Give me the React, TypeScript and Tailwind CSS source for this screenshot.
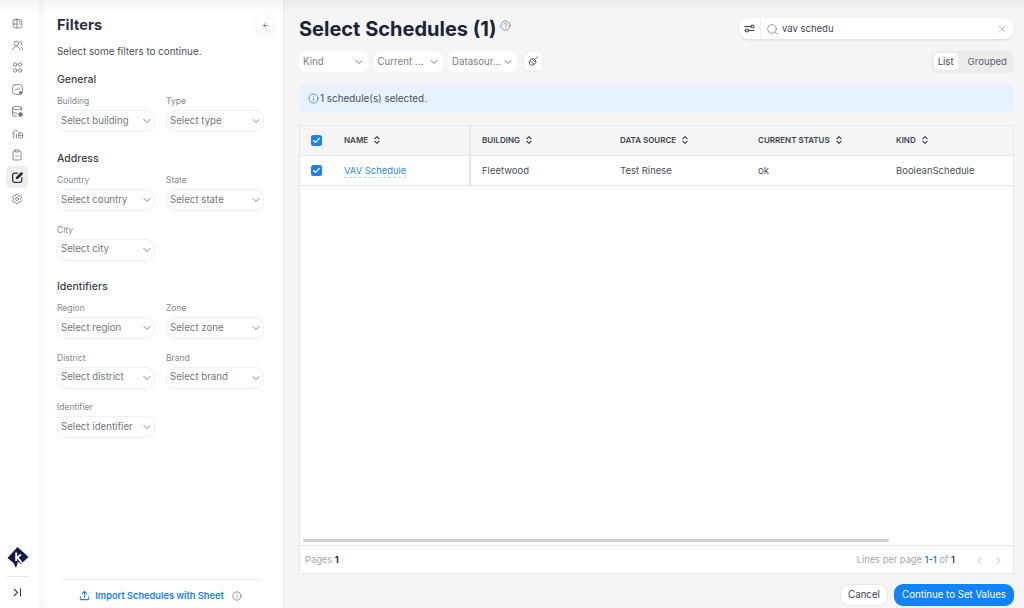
import React from "react";
import { ChevronDown, ChevronLeft, ChevronRight, ChevronsUpDown, Search, X, Info, CircleHelp, ArrowLeft, Upload, Check, Settings, ClipboardCheck } from "lucide-react";

const S = ({ children, w = 1.6 }: { children: React.ReactNode; w?: number }) => (
  <svg width="13" height="13" viewBox="0 0 24 24" fill="none" stroke="currentColor" strokeWidth={w} strokeLinecap="round" strokeLinejoin="round">{children}</svg>
);

const RailBtn = ({ children, active }: { children: React.ReactNode; active?: boolean }) => (
  <div className={`w-[22px] h-[22px] flex items-center justify-center rounded-[5px] ${active ? "bg-[#eeeeee] text-[#2b3040]" : "text-[#737987]"}`}>{children}</div>
);

const Field = ({ label, placeholder }: { label: string; placeholder: string }) => (
  <div className="w-[98px]">
    <div className="h-[12px] leading-[12px] text-[8.5px] text-[#83878f]">{label}</div>
    <div className="mt-[3px] h-[22px] rounded-[9px] border border-[#eeeff1] flex items-center justify-between pl-[3px] pr-[1px] text-[#73777f] text-[9.7px] whitespace-nowrap">
      <span>{placeholder}</span>
      <ChevronDown size={12} strokeWidth={1.5} className="text-[#555b66] shrink-0" />
    </div>
  </div>
);

const Section = ({ title, className, children }: { title: string; className?: string; children: React.ReactNode }) => (
  <div className={className}>
    <div className="h-[14px] leading-[14px] text-[10.5px] font-medium text-[#3a3f4c]">{title}</div>
    {children}
  </div>
);

const Pill = ({ label }: { label: string }) => (
  <div className="w-[69px] h-[21px] rounded-[8px] bg-white flex items-center justify-between pl-[4px] pr-[3px] pt-[1px] text-[9.7px] text-[#7c8088] whitespace-nowrap">
    <span>{label}</span>
    <ChevronDown size={12} strokeWidth={1.6} className="text-[#555b66] shrink-0" />
  </div>
);

const Th = ({ label, className }: { label: string; className: string }) => (
  <div className={`flex items-center gap-[4px] h-full pb-[1px] text-[8px] font-semibold text-[#3f4450] whitespace-nowrap ${className}`}>
    {label}
    <ChevronsUpDown size={10} strokeWidth={2.6} className="text-[#3f4450]" />
  </div>
);

const Box = () => (
  <div className="w-[11px] h-[11px] rounded-[2.5px] bg-[#1b80f0] flex items-center justify-center">
    <Check size={9} strokeWidth={3} className="text-white" />
  </div>
);

export default function App() {
  return (
    <div className="flex w-[1024px] h-[608px] overflow-hidden bg-[#f5f5f5] text-[#3a3f4c] relative" style={{ fontFamily: "Inter, 'Noto Sans', sans-serif" }}>
      {/* rail */}
      <div className="w-[39px] shrink-0 bg-white flex flex-col items-center">
        <div className="mt-[12px] flex flex-col mr-[5px]">
          <RailBtn><S><rect x="4" y="5" width="16" height="15" rx="2" /><path d="M11 3v17M4 13h7M15 9h2M15 13h2" /></S></RailBtn>
          <RailBtn><S><circle cx="10" cy="8" r="4" /><path d="M3 20c1-4 4-6 7-6s6 2 7 6M16 5a3 3 0 0 1 2 6M19 15c1.5 1 2.5 3 3 5" /></S></RailBtn>
          <RailBtn><S><circle cx="7.5" cy="6.5" r="3.2" /><circle cx="16.5" cy="6.5" r="3.2" /><circle cx="7.5" cy="17.5" r="3.2" /><circle cx="16.5" cy="17.5" r="3.2" /></S></RailBtn>
          <RailBtn><S><rect x="3" y="3" width="18" height="18" rx="5" /><path d="M7.5 14l3.5-3.5 2 2 3.5-4" /><circle cx="18" cy="18" r="2.5" fill="currentColor" /></S></RailBtn>
          <RailBtn><S><ellipse cx="11" cy="5.5" rx="8" ry="3" /><path d="M3 5.5v13c0 1.5 3 2.5 7 2.5M19 5.5v5M3 12c0 1.5 3 3 8 3" /><circle cx="17.5" cy="17.5" r="3.5" fill="currentColor" /></S></RailBtn>
          <RailBtn><S><path d="M2 12l7-7 4 3.5M5 10v11M10 21v-7" /><rect x="14" y="11" width="7.5" height="9.5" rx="2" /><path d="M14 15.5h7.5" /></S></RailBtn>
          <RailBtn><ClipboardCheck size={12} strokeWidth={1.7} /></RailBtn>
          <RailBtn active><S w={2.3}><path d="M20 12v5a4 4 0 0 1-4 4H7a4 4 0 0 1-4-4V8a4 4 0 0 1 4-4h5" /><path d="M10 14l1-3 8-8 2 2-8 8z" fill="currentColor" /></S></RailBtn>
          <RailBtn><Settings size={12} strokeWidth={1.6} /></RailBtn>
        </div>
        <div className="mt-auto mr-[4px] flex flex-col items-center">
          <svg width="22" height="23" viewBox="0 0 22 23">
            <path d="M10.5 1 L21.5 11 L14 18 L11 15.5 L9 22 L6.5 17 L0.5 12 Z" fill="#0e1b4d" />
            <path d="M9.2 6.5v8.5M9.5 12l4.5-3.5M10.5 11.5l4.5 5.5" stroke="#fff" strokeWidth="1.9" fill="none" />
          </svg>
          <div className="w-[22px] h-px bg-[#e8e9eb] mt-[7px]" />
          <div className="h-[31px] flex items-center text-[#3a3f4c]">
            <svg width="9" height="9" viewBox="0 0 9 9" fill="none" stroke="currentColor" strokeWidth="1.1"><path d="M1 1l3.5 3.5L1 8M7.5 0.5v8" /></svg>
          </div>
        </div>
      </div>

      {/* filters */}
      <div className="w-[244px] shrink-0 bg-white flex flex-col pl-[18px] pr-[19px] shadow-[inset_9px_0_10px_-6px_rgba(0,0,0,0.05)]">
        <div className="flex items-center justify-between h-[18px] mt-[16px]">
          <div className="text-[14.5px] font-bold text-[#2b3040] tracking-[0.1px]">Filters</div>
          <div className="w-[16px] h-[16px] mr-[-9px] rounded-full bg-white shadow-[0_1px_8px_rgba(0,0,0,0.08)] flex items-center justify-center text-[#555b66]"><ArrowLeft size={7} strokeWidth={2.4} /></div>
        </div>
        <div className="mt-[10px] h-[14px] leading-[14px] text-[9.9px] text-[#4a4f5a]">Select some filters to continue.</div>
        <Section title="General" className="mt-[15px]">
          <div className="mt-[8px] flex gap-[11px]">
            <Field label="Building" placeholder="Select building" />
            <Field label="Type" placeholder="Select type" />
          </div>
        </Section>
        <Section title="Address" className="mt-[20px]">
          <div className="mt-[8px] flex flex-wrap gap-x-[11px] gap-y-[12.7px]">
            <Field label="Country" placeholder="Select country" />
            <Field label="State" placeholder="Select state" />
            <Field label="City" placeholder="Select city" />
          </div>
        </Section>
        <Section title="Identifiers" className="mt-[19.3px]">
          <div className="mt-[8px] flex flex-wrap gap-x-[11px] gap-y-[12.7px]">
            <Field label="Region" placeholder="Select region" />
            <Field label="Zone" placeholder="Select zone" />
            <Field label="District" placeholder="Select district" />
            <Field label="Brand" placeholder="Select brand" />
            <Field label="Identifier" placeholder="Select identifier" />
          </div>
        </Section>
        <div className="mt-auto ml-[6px] mr-[4px] border-t border-[#e8e9eb] h-[29px] pt-[3px] pr-[2px] flex items-center justify-center gap-[5px] text-[#1b80f0] text-[9.25px] font-semibold whitespace-nowrap">
          <Upload size={11} strokeWidth={2.2} />
          <span>Import Schedules with Sheet</span>
          <Info size={10} strokeWidth={1.5} className="ml-[3px] text-[#555b66]" />
        </div>
      </div>

      {/* main */}
      <div className="flex-1 min-w-0 flex flex-col pl-[15px] pr-[10px] border-l border-[#ececec]">
        <div className="flex items-start justify-between h-[51px]">
          <div className="flex items-start mt-[16px]">
            <div className="text-[20px] leading-[26px] font-bold text-[#1c2238] whitespace-nowrap">Select Schedules (1)</div>
            <CircleHelp size={11} strokeWidth={1.5} className="text-[#6b7079] ml-[4px] mt-[4px]" />
          </div>
          <div className="flex items-center mt-[18px] h-[21px] rounded-[9px] bg-white shadow-[0_1px_3px_rgba(0,0,0,0.12)]">
            <div className="w-[21px] flex items-center justify-center text-[#3a3f4c]">
              <svg width="11" height="11" viewBox="0 0 11 11" fill="none" stroke="currentColor" strokeWidth="1.1"><path d="M0.5 3.5h6.5M0.5 7.5h1M4.5 7.5h6" /><circle cx="8.5" cy="3.5" r="1.5" /><circle cx="3" cy="7.5" r="1.5" /></svg>
            </div>
            <div className="w-[254px] h-full flex items-center border-l border-[#eeeeee] pl-[5px] pr-[6px] pt-[1px] text-[9.5px] text-[#3f4450]">
              <Search size={13} strokeWidth={1.1} className="text-[#555b66]" />
              <span className="ml-[3px]">vav schedu</span>
              <X size={12} strokeWidth={1} className="ml-auto text-[#80848d]" />
            </div>
          </div>
        </div>
        <div className="flex items-center justify-between h-[21px]">
          <div className="flex items-center gap-[5.5px]">
            <Pill label="Kind" />
            <Pill label="Current ..." />
            <Pill label="Datasour..." />
            <div className="w-[21px] h-[21px] rounded-[8px] bg-white border border-[#ececec] flex items-center justify-center text-[#555b66]">
              <svg width="11" height="11" viewBox="0 0 11 11" fill="none" stroke="currentColor" strokeWidth="0.9"><path d="M6.5 3.5L10 0.5" /><ellipse cx="4.5" cy="6" rx="3.5" ry="3" transform="rotate(-35 4.5 6)" /><path d="M2 5l4 3M4 3l3 3" /></svg>
            </div>
          </div>
          <div className="flex items-center h-[22px] rounded-[7px] bg-[#ececec] pl-[3px] text-[9.6px]">
            <div className="w-[24px] h-[17px] pt-[1px] flex items-center justify-center rounded-[5px] bg-white text-[#3f4450]">List</div>
            <div className="ml-[10px] pr-[7px] pt-[1px] text-[#5d6270]">Grouped</div>
          </div>
        </div>
        <div className="mt-[11px] h-[30px] rounded-[8px] bg-[#e7f2fe] flex items-center pl-[9px] text-[9.9px] text-[#4a4f5a] gap-[1px] shrink-0">
          <Info size={11} strokeWidth={1.6} className="text-[#1b80f0]" />
          <span>1 schedule(s) selected.</span>
        </div>
        <div className="mt-[12px] h-[449px] shrink-0 border border-[#e6e7e9] bg-white flex flex-col">
          <div className="h-[30px] flex items-center bg-[#f5f5f5] border-b border-[#e6e7e9] shrink-0">
            <div className="w-[171px] h-full flex items-center border-r-2 border-[#e6e7e9]">
              <div className="w-[44px] pl-[11px]"><Box /></div>
              <Th label="NAME" className="" />
            </div>
            <Th label="BUILDING" className="w-[138px] pl-[11px]" />
            <Th label="DATA SOURCE" className="w-[138px] pl-[11px]" />
            <Th label="CURRENT STATUS" className="w-[138px] pl-[11px]" />
            <Th label="KIND" className="pl-[11px]" />
          </div>
          <div className="h-[30px] flex items-center border-b border-[#e6e7e9] shrink-0 text-[9.5px] text-[#4a4f5a]">
            <div className="w-[171px] h-full flex items-center border-r-2 border-[#e6e7e9]">
              <div className="w-[44px] pl-[11px]"><Box /></div>
              <span className="text-[9.4px] text-[#2f86e0] border-b border-dashed border-[#b5d5f5] leading-[12px] mt-[1px]">VAV Schedule</span>
            </div>
            <div className="w-[138px] pl-[11px] pt-[1px]">Fleetwood</div>
            <div className="w-[138px] pl-[11px] pt-[1px]">Test Rinese</div>
            <div className="w-[138px] pl-[11px] pt-[1px]">ok</div>
            <div className="pl-[11px] pt-[1px]">BooleanSchedule</div>
          </div>
          <div className="flex-1 flex flex-col justify-end pb-[3px] pl-[3px]">
            <div className="w-[586px] h-[3px] rounded-full bg-[#cfcfcf]" />
          </div>
          <div className="h-[28px] border-t border-[#e6e7e9] flex items-center justify-between pl-[5px] pr-[9px] text-[9.3px] text-[#a4a8b0] shrink-0">
            <div className="mt-[1px]">Pages <span className="font-bold text-[#2b3040]">1</span></div>
            <div className="flex items-center mt-[1px]">
              <span>Lines per page <span className="font-semibold text-[#2f86e0]">1-1</span> of <span className="font-semibold text-[#3a3f4c]">1</span></span>
              <ChevronLeft size={11} strokeWidth={1.8} className="ml-[19px]" />
              <ChevronRight size={11} strokeWidth={1.8} className="ml-[8px]" />
            </div>
          </div>
        </div>
        <div className="mt-[10px] flex items-center justify-end gap-[6px]">
          <div className="w-[48px] h-[22px] rounded-[9px] bg-white border border-[#e6e7e9] flex items-center justify-center text-[9.7px] text-[#3a3f4c]">Cancel</div>
          <div className="w-[120px] h-[22px] rounded-[9px] bg-[#1083fb] flex items-center justify-center text-[9.7px] text-white whitespace-nowrap">Continue to Set Values</div>
        </div>
      </div>

      {/* top shade */}
      <div className="absolute left-0 top-0 right-0 h-[14px] pointer-events-none z-20 bg-gradient-to-b from-[rgba(0,0,0,0.04)] to-transparent" />
    </div>
  );
}
